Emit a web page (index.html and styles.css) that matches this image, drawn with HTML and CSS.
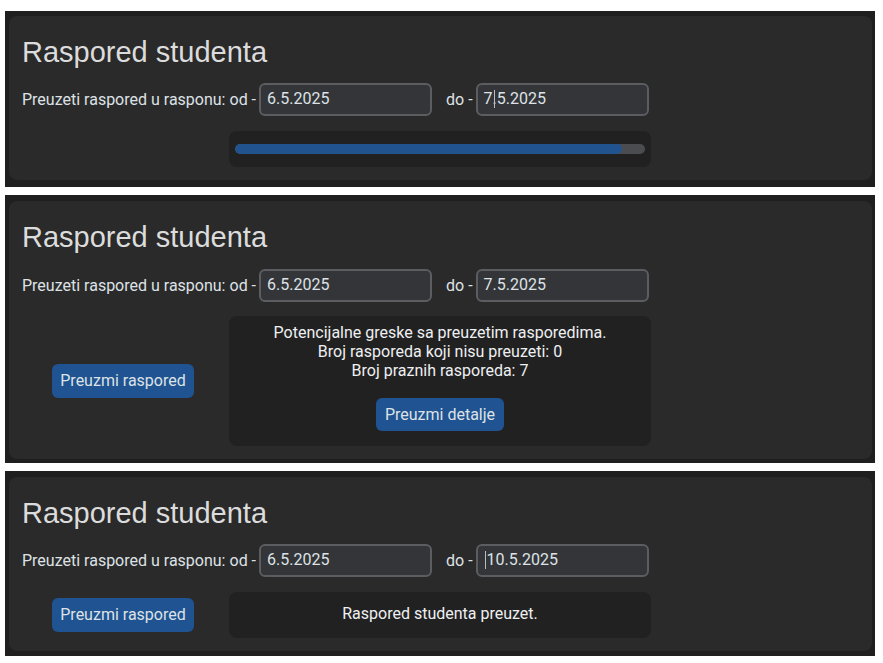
FILE: index.html
```html
<!DOCTYPE html>
<html lang="hr">
<head>
<meta charset="utf-8">
<title>Raspored studenta</title>
<link rel="stylesheet" href="styles.css">
</head>
<body>
  <section class="shot shot-1">
    <div class="card">
      <h3 class="title">Raspored studenta</h3>
      <div class="range-row">
        <span class="label">Preuzeti raspored u rasponu:</span>
        <span class="sep">od -</span>
        <div class="date-input">6.5.2025</div>
        <span class="sep sep-do">do -</span>
        <div class="date-input">7.<span class="caret caret-mid"></span>5.2025</div>
      </div>
      <div class="action-row">
        <div class="action-col"></div>
        <div class="status-box progress-box">
          <div class="track"><div class="fill" style="width:94.3%"></div></div>
        </div>
      </div>
    </div>
  </section>

  <section class="shot shot-2">
    <div class="card">
      <h3 class="title">Raspored studenta</h3>
      <div class="range-row">
        <span class="label">Preuzeti raspored u rasponu:</span>
        <span class="sep">od -</span>
        <div class="date-input">6.5.2025</div>
        <span class="sep sep-do">do -</span>
        <div class="date-input">7.5.2025</div>
      </div>
      <div class="action-row">
        <div class="action-col"><button class="btn">Preuzmi raspored</button></div>
        <div class="status-box message-box">
          <div class="msg-lines">
            <div>Potencijalne greske sa preuzetim rasporedima.</div>
            <div>Broj rasporeda koji nisu preuzeti: 0</div>
            <div>Broj praznih rasporeda: 7</div>
          </div>
          <button class="btn btn-details">Preuzmi detalje</button>
        </div>
      </div>
    </div>
  </section>

  <section class="shot shot-3">
    <div class="card">
      <h3 class="title">Raspored studenta</h3>
      <div class="range-row">
        <span class="label">Preuzeti raspored u rasponu:</span>
        <span class="sep">od -</span>
        <div class="date-input">6.5.2025</div>
        <span class="sep sep-do">do -</span>
        <div class="date-input"><span class="caret caret-start"></span>10.5.2025</div>
      </div>
      <div class="action-row">
        <div class="action-col"><button class="btn">Preuzmi raspored</button></div>
        <div class="status-box done-box">Raspored studenta preuzet.</div>
      </div>
    </div>
  </section>
</body>
</html>
```

FILE: styles.css
```css
* { box-sizing: border-box; }

html, body {
  background: #ffffff;
}

body {
  margin: 0;
  padding: 11px 8px 0 5px;
  font-family: Roboto, "Liberation Sans", Arial, sans-serif;
  font-size: 16px;
  color: #dee2e6;
}

.shot {
  width: 870px;
  background: #1f1f1f;
  padding: 5px 3px 6px 4px;
  margin-bottom: 8px;
}
.shot-1 { padding-top: 5px; padding-bottom: 7px; }
.shot-2 { padding-top: 6px; padding-bottom: 4px; }
.shot-3 { padding-top: 6px; padding-bottom: 5px; }

.card {
  background: #2a2a2a;
  border-radius: 8px;
  padding: 19px 13px 13px 13px;
}

.title {
  margin: 0;
  font-family: "Liberation Sans", Arial, sans-serif;
  font-weight: 400;
  font-size: 29px;
  line-height: 34px;
  color: #dcdcdc;
}

.range-row {
  display: flex;
  align-items: center;
  margin-top: 14px;
  height: 33px;
}
.shot-2 .range-row { margin-top: 15px; }

.label {
  color: #dee2e6;
}

.sep {
  margin-left: 4px;
  margin-right: 3px;
}
.sep-do {
  margin-left: 14px;
}

.date-input {
  width: 173px;
  height: 33px;
  display: flex;
  align-items: center;
  padding: 0 6px 2px 6px;
  background: #333538;
  border: 2px solid #5b5d60;
  border-radius: 6px;
  color: #dee2e6;
}

.caret {
  display: inline-block;
  width: 1px;
  height: 18px;
  background: #b9bcc0;
}
.caret-mid { margin-left: -3px; margin-right: 2px; }
.caret-start { margin-left: 1px; margin-right: 1px; }

.action-row {
  display: grid;
  grid-template-columns: 202px 422px;
  column-gap: 5px;
  align-items: center;
  margin-top: 14px;
}
.shot-1 .action-row, .shot-3 .action-row { margin-top: 15px; }

.action-col {
  display: flex;
  justify-content: center;
}

.btn {
  font-family: Roboto, "Liberation Sans", Arial, sans-serif;
  font-size: 16px;
  line-height: 20px;
  color: #dee2e6;
  background: #1f5391;
  border: none;
  border-radius: 6px;
  padding: 7px 8px;
  cursor: pointer;
}

.status-box {
  background: #212121;
  border-radius: 8px;
}

.progress-box {
  padding: 13px 6px 13px 6px;
}
.track {
  height: 10px;
  background: #4a4c4f;
  border-radius: 5px;
  overflow: hidden;
}
.fill {
  height: 100%;
  background: #21548f;
  border-radius: 5px;
}

.message-box {
  height: 130px;
  padding: 8px 10px 0;
  display: flex;
  flex-direction: column;
  align-items: center;
  text-align: center;
  color: #eef0f2;
}
.msg-lines {
  line-height: 18.75px;
}
.btn-details {
  margin-top: 18px;
  padding: 6.5px 9px;
}

.done-box {
  padding: 13px 10px 14px;
  text-align: center;
  line-height: 18.75px;
  color: #eef0f2;
}
```
